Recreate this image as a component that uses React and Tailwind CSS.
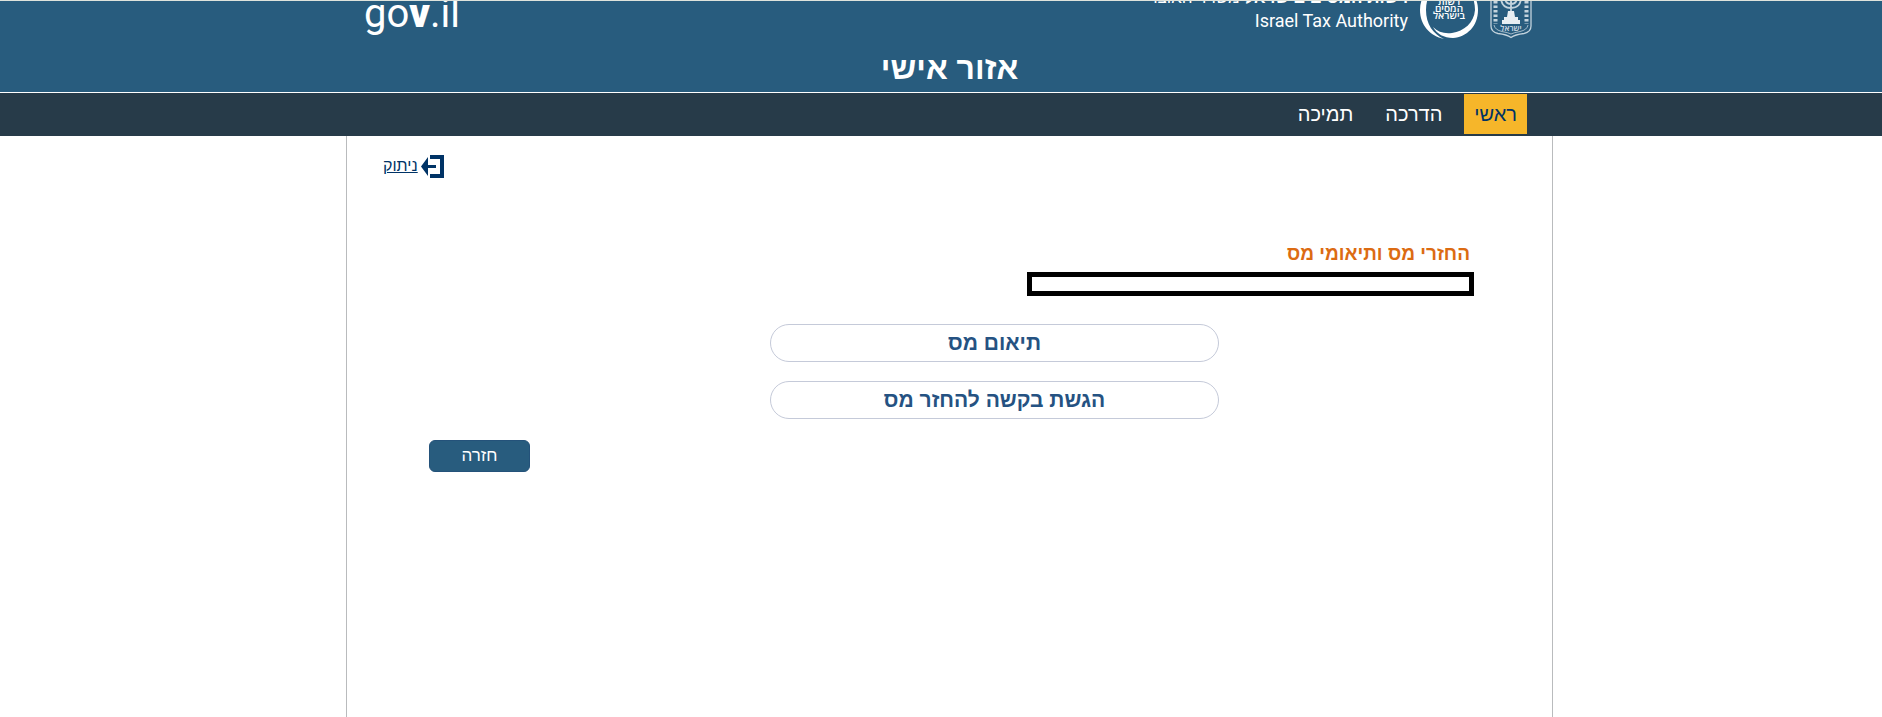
import React from 'react'

const menu = [
  { label: 'ראשי', active: true },
  { label: 'הדרכה', active: false },
  { label: 'תמיכה', active: false }
]

const actions = ['תיאום מס', 'הגשת בקשה להחזר מס']

const StateEmblem = () => (
  <svg width="42" height="56" viewBox="0 0 42 56" fill="none" stroke="#c3d3dd" aria-hidden="true">
    <path d="M1 0V43Q1 49 8 50.500Q17 51.500 21 54.500Q25 51.500 34 50.500Q41 49 41 43V0" strokeWidth="1.3" />
    <path d="M5.500 0V41M36.500 0V41" strokeWidth="4" strokeDasharray="2.5 2" />
    <path d="M4 42Q5 47 12 48.500Q18 49.500 21 51Q24 49.500 30 48.500Q37 47 38 42" strokeWidth="0.8" />
    <path d="M21 10V30M11 14Q11 25 21 25Q31 25 31 14M15 14Q15 21 21 21Q27 21 27 14" strokeWidth="1.8" />
    <path d="M18 28H24L25 34H28V37H30V41H12V37H14V34H17Z" fill="#e8eef2" stroke="none" />
    <text x="21" y="48" textAnchor="middle" fontSize="8" fontWeight="600" fontFamily="'Open Sans', sans-serif" fill="#d3dfe7" stroke="none">ישראל</text>
  </svg>
)

const AuthoritySeal = () => (
  <svg width="58" height="58" viewBox="0 0 58 58" fill="#fff" aria-hidden="true">
    <path d="M24 58C10 55 0 44 0 29C0 14 10 3 24 0C12 6 6 16 6 29C6 43 13 53 24 58Z" />
    <path d="M13 46C18 51 24 53 32 52C44 50 54 42 55 29C55 18 50 8 42 2C51 7 58 17 58 29C58 45 47 56 33 57C24 57 17 53 13 46Z" />
    <g fontSize="10" fontWeight="600" fontFamily="'Open Sans', sans-serif" textAnchor="middle">
      <text x="29" y="24">רשות</text>
      <text x="29" y="31">המסים</text>
      <text x="29" y="38">בישראל</text>
    </g>
  </svg>
)

const LogoutIcon = () => (
  <svg width="23" height="23" viewBox="0 0 23 23" fill="#003366" aria-hidden="true">
    <path d="M9 0H23V23H9V19H19V4H9Z" />
    <path d="M0 11.500L7 2V10H15V13H7V21Z" />
  </svg>
)

const Header = () => (
  <header className="overflow-hidden border-t border-b border-t-[#dfe3dc] border-b-white bg-[#285c7e] pl-[17px] text-white">
    <div className="mx-auto -mt-5 flex max-w-[1207px] items-start justify-between pr-[21px] pl-[18px]">
      <div className="flex items-end">
        <StateEmblem />
        <div className="mr-3">
          <AuthoritySeal />
        </div>
        <div className="mr-3 flex h-[52px] flex-col justify-end pb-[5px]">
          <p className="text-[17px] leading-5">
            <strong>רשות המסים בישראל</strong> משרד האוצר
          </p>
          <p dir="ltr" className="text-right font-['Liberation_Sans_Narrow',Roboto,sans-serif] text-lg leading-[26px]">
            Israel Tax Authority
          </p>
        </div>
      </div>
      <a
        href="#"
        dir="ltr"
        className="mt-[9px] font-['Roboto',sans-serif] text-[40px] leading-[48px] font-normal"
      >
        go<span className="font-black">v</span>.il
      </a>
    </div>
    <h1 className="mt-[9px] pb-[3px] text-center text-[32px] leading-[41px] font-bold">אזור אישי</h1>
  </header>
)

const Nav = () => (
  <nav className="bg-[#273b49] pt-px pb-0.5 pl-[17px]">
    <ul className="mx-auto flex max-w-[1207px] gap-3 pr-[26px]">
      {menu.map((item) => (
        <li key={item.label}>
          <a
            href="#"
            className={
              item.active
                ? 'block bg-[#f6b62a] px-2.5 text-xl leading-10 text-[#003366]'
                : 'block px-2.5 text-xl leading-10 text-white'
            }
          >
            {item.label}
          </a>
        </li>
      ))}
    </ul>
  </nav>
)

const App = () => {
  return (
    <div dir="rtl" className="flex min-h-screen flex-col bg-white font-['Liberation_Sans',Arial,sans-serif]">
      <Header />
      <Nav />
      <div className="flex grow pl-[17px]">
        <main className="mx-auto w-full max-w-[1207px] border-x border-[#b9bbbd] pt-[18px]">
          <div className="flex justify-end pl-9">
            <a href="#" className="flex items-center gap-[3px] text-base leading-6 text-[#003366]">
              <LogoutIcon />
              <span className="underline">ניתוק</span>
            </a>
          </div>

          <section className="mt-16 pr-[78px] pl-[82px]">
            <h2 className="pr-1 text-[19px] leading-6 font-bold text-[#dc6b12]">
              החזרי מס ותיאומי מס
            </h2>
            <div className="mt-1.5 h-6 max-w-[447px] border-5 border-black"></div>
            <div className="mt-7 mr-[255px] flex max-w-[449px] flex-col gap-[19px]">
              {actions.map((label) => (
                <button
                  key={label}
                  type="button"
                  className="h-[38px] rounded-full border border-[#c5cad9] text-[21px] leading-6 font-bold text-[#255282]"
                >
                  {label}
                </button>
              ))}
            </div>
            <div className="mt-[21px] flex justify-end">
              <button
                type="button"
                className="h-8 w-[101px] rounded-md border border-[#24527a] bg-[#285c7e] text-[17px] leading-6 text-white"
              >
                חזרה
              </button>
            </div>
          </section>
        </main>
      </div>
    </div>
  )
}

export default App
